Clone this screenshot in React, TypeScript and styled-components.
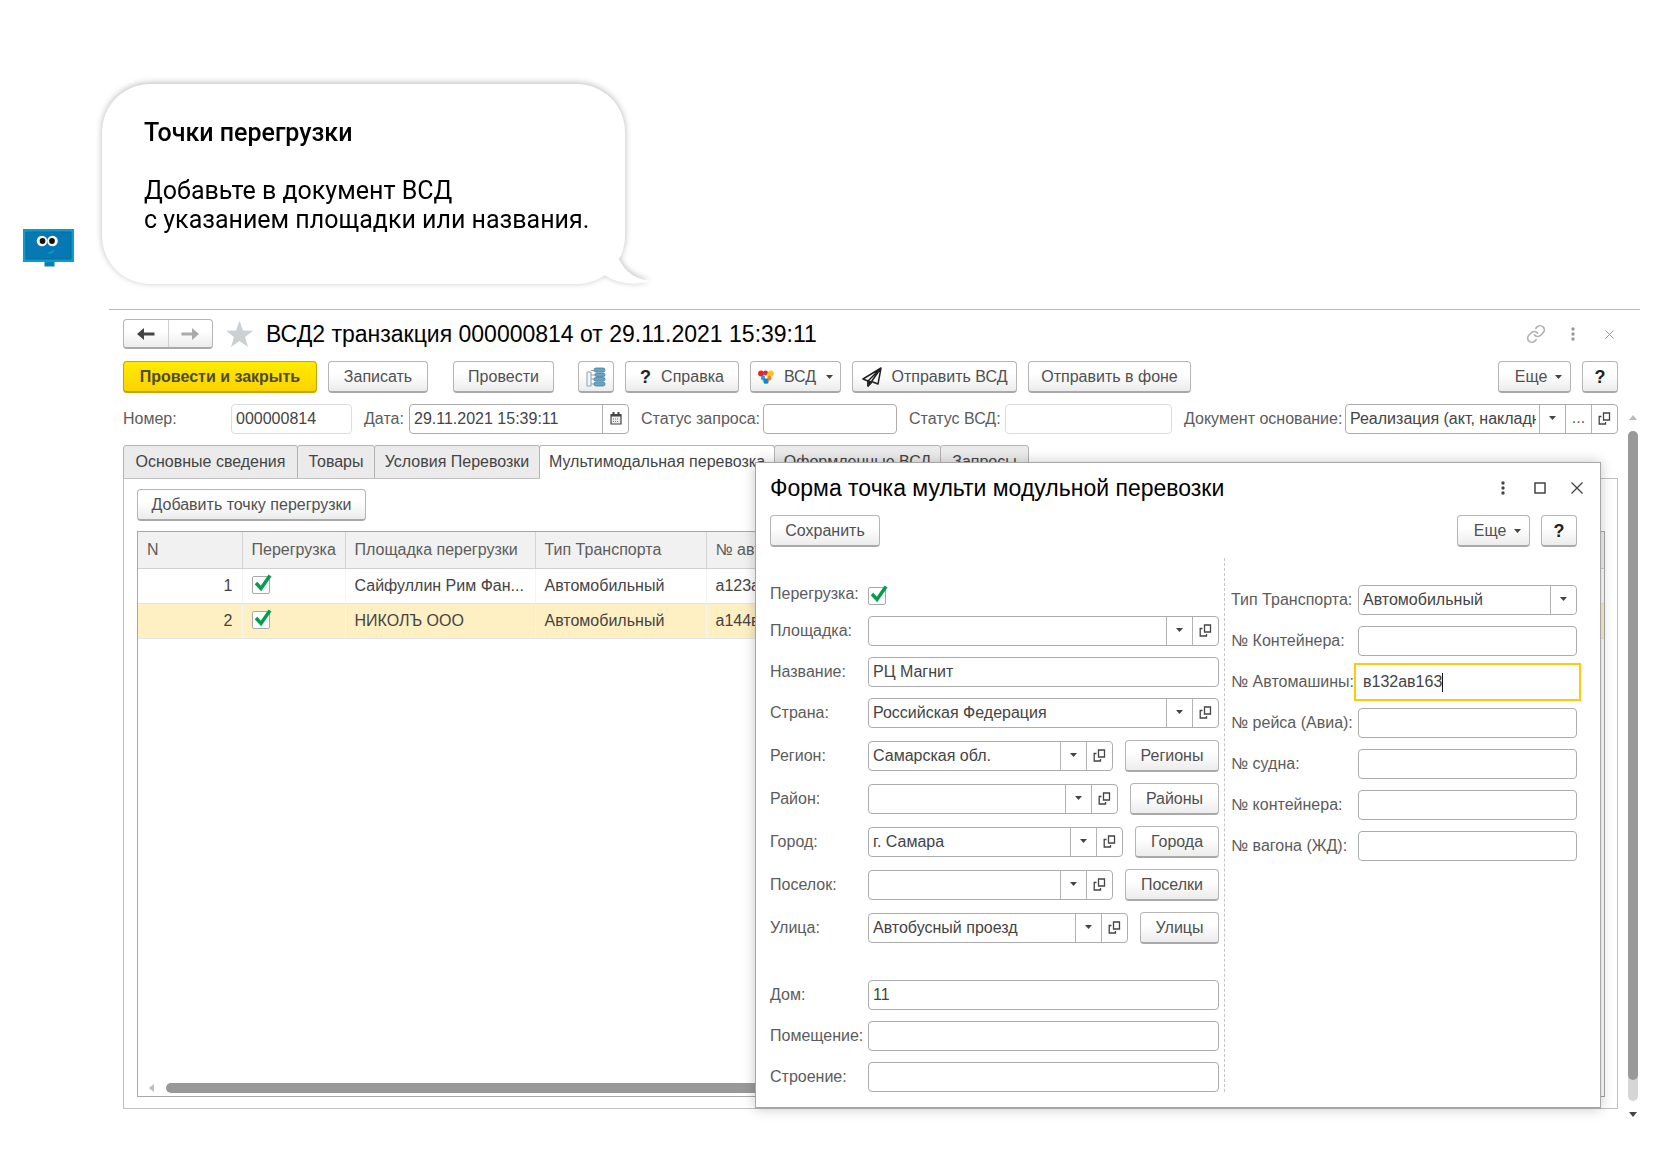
import React from 'react';
import styled, { createGlobalStyle, css } from 'styled-components';

const line = '#b3b3b3';
const sans = '"Liberation Sans", Arial, sans-serif';

const GlobalStyle = createGlobalStyle`
  *, *::before, *::after { box-sizing: border-box; }
  body { margin: 0; background: #fff; color: #444; font: 16px/20px ${sans}; }
  button, input, select { font: inherit; color: inherit; }
`;

/* ---------- page and speech bubble ---------- */

const Page = styled.main`
  padding: 84px 40px 40px 23px;
`;

const Hint = styled.section`
  display: flex;
  align-items: flex-end;
  gap: 28px;
`;

const RobotSlot = styled.div`
  flex: none;
  width: 51px;
  height: 39px;
  margin-bottom: 16px;
  svg { display: block; }
`;

const Bubble = styled.div`
  position: relative;
  width: 523px;
  height: 200px;
  padding: 34px 30px 0 42px;
  border-radius: 48px;
  background: #fff;
  color: #000;
  font: 25px/29px Roboto, sans-serif;
  filter: drop-shadow(0 -1px 3px rgba(0, 0, 0, 0.28));
  h2 { margin: 0 0 29px; font-size: 25px; line-height: 29px; font-weight: 500; }
  p { margin: 0; white-space: nowrap; }
`;

const Tail = styled.svg`
  position: absolute;
  right: -25px;
  bottom: 0;
`;

/* ---------- shared controls ---------- */

const Button = styled.button<{ $w: number; $primary?: boolean; $menu?: boolean }>`
  flex: none;
  display: inline-flex;
  align-items: center;
  justify-content: center;
  gap: ${p => (p.$menu ? 8 : 10)}px;
  width: ${p => p.$w}px;
  height: 32px;
  padding: ${p => (p.$menu ? '0 0 0 8px' : '0')};
  border: 1px solid #b5b5b5;
  border-bottom: 2px solid #a9a9a9;
  border-radius: 4px;
  background: linear-gradient(#fff 40%, #ececec);
  color: #505050;
  white-space: nowrap;
  ${p => p.$primary && css`
    border-color: #c4a600;
    background: linear-gradient(#ffeb00, #fbd300);
    color: #4d4a35;
    font-weight: 700;
  `}
`;

const Mark = styled.b`
  color: #222;
  font-size: 18px;
`;

const IconButton = styled.button`
  display: grid;
  place-items: center;
  width: 37px;
  height: 28px;
  padding: 0;
  border: 0;
  background: none;
`;

const Box = styled.div<{ $quiet?: boolean; $w?: number }>`
  display: flex;
  ${p => (p.$w ? css`flex: none; width: ${p.$w}px;` : css`flex: 1 1 0;`)}
  min-width: 0;
  height: 30px;
  border: 1px solid ${p => (p.$quiet ? '#dcdcdc' : '#acacac')};
  border-radius: 4px;
  background: #fff;
  input, select {
    flex: 1;
    min-width: 0;
    width: 0;
    margin: 0 3px 0 4px;
    padding: 0;
    border: 0;
    outline: 0;
    background: none;
    appearance: none;
  }
`;

const BoxButton = styled.button`
  flex: none;
  display: grid;
  place-items: center;
  width: 26px;
  padding: 0 0 2px;
  border: 0;
  border-left: 1px solid ${line};
  background: none;
`;

const BoxArrow = styled.span`
  flex: none;
  display: grid;
  place-items: center;
  width: 26px;
  padding-bottom: 2px;
  border-left: 1px solid ${line};
`;

const FocusBox = styled.div`
  display: flex;
  align-items: center;
  flex: 1;
  height: 38px;
  margin: -4px;
  padding: 0 7px;
  border: 2px solid #fdcb0c;
  background: #fff;
  input {
    field-sizing: content;
    padding: 0;
    border: 0;
    outline: 0;
    background: none;
    caret-color: transparent;
  }
`;

const Caret = styled.span`
  width: 1px;
  height: 19px;
  background: #111;
`;

const CheckSlot = styled.span`
  display: inline-grid;
  width: 20px;
  height: 22px;
  align-items: end;
  input, svg { grid-area: 1 / 1; }
  input {
    appearance: none;
    width: 18px;
    height: 18px;
    margin: 0;
    border: 1px solid #a8a8a8;
    border-radius: 2px;
    background: #fff;
  }
  svg { pointer-events: none; z-index: 1; }
`;

const Check = ({ id, label }: { id?: string; label?: string }) => (
  <CheckSlot>
    <input type="checkbox" id={id} aria-label={label} defaultChecked />
    <svg width="20" height="22" viewBox="0 0 20 22">
      <path d="M4 11l5 5.500L18 3.500" fill="none" stroke="#009f4d" strokeWidth="3.500" />
    </svg>
  </CheckSlot>
);

const Caretlet = () => (
  <svg width="7" height="4" viewBox="0 0 7 4"><path d="M0 0h7L3.500 4z" fill="#444" /></svg>
);

const OpenIcon = () => (
  <svg width="13" height="13" viewBox="0 0 13 13" fill="none" stroke="#444" strokeWidth="1.300">
    <path d="M5.500 1h6v7h-6z" />
    <path d="M3.500 4.500H1.200V12H7.500v-2" />
  </svg>
);

const CalendarIcon = () => (
  <svg width="12" height="13" viewBox="0 0 12 13">
    <path d="M1 2.500h10v9.500H1z" fill="#eee" stroke="#444" strokeWidth="1.200" />
    <path d="M1 2h10v2.500H1zM2.500 0h2v3h-2zM7.500 0h2v3h-2z" fill="#444" />
    <path d="M3 7h6M3 9.500h6" stroke="#777" strokeDasharray="1 1" />
  </svg>
);

const Dots = ({ color }: { color: string }) => (
  <svg width="4" height="14" viewBox="0 0 4 14" fill={color}>
    <circle cx="2" cy="2" r="1.700" /><circle cx="2" cy="7" r="1.700" /><circle cx="2" cy="12" r="1.700" />
  </svg>
);

const Cross = ({ size, color }: { size: number; color: string }) => (
  <svg width={size} height={size} viewBox="0 0 12 12">
    <path d="M0.500 0.500l11 11M11.500 0.500l-11 11" stroke={color} strokeWidth="1.300" />
  </svg>
);

/* ---------- document window ---------- */

const Window = styled.section`
  display: flex;
  gap: 10px;
  margin: 25px 0 0 86px;
  padding: 8px 2px 0 14px;
  border-top: 1px solid #b9b9b9;
`;

const WindowBody = styled.div`
  flex: 1;
  min-width: 0;
`;

const TitleBar = styled.header`
  display: flex;
  align-items: center;
  height: 32px;
  margin-right: -10px;
  h1 { flex: 1; margin: 0 0 0 13px; color: #000; font-size: 23px; line-height: 28px; font-weight: 400; white-space: nowrap; }
`;

const NavGroup = styled.div`
  display: flex;
  width: 90px;
  height: 30px;
  margin-right: 13px;
  border: 1px solid #b5b5b5;
  border-bottom: 2px solid #a9a9a9;
  border-radius: 4px;
  background: linear-gradient(#fff 40%, #ececec);
  button { flex: 1; display: grid; place-items: center; padding: 0; border: 0; background: none; }
  button + button { border-left: 1px solid #cfcfcf; }
`;

const Toolbar = styled.div`
  display: flex;
  gap: 11px;
  margin-top: 11px;
`;

const Spacer = styled.span<{ $w?: number }>`
  ${p => (p.$w ? css`width: ${p.$w}px;` : css`flex: 1;`)}
`;

const FieldRow = styled.div`
  display: flex;
  align-items: center;
  margin-top: 11px;
  color: #5c5c5c;
  input { color: #444; }
`;

const FieldLabel = styled.label<{ $w: number }>`
  flex: none;
  width: ${p => p.$w}px;
  white-space: nowrap;
`;

const Stage = styled.div`
  display: grid;
  margin-top: 11px;
  > * { grid-area: 1 / 1; min-width: 0; }
`;

const TabArea = styled.div`
  display: flex;
  flex-direction: column;
`;

const Tabs = styled.div`
  display: flex;
  height: 34px;
  margin-bottom: -1px;
`;

const Tab = styled.button<{ $w: number; $on?: boolean }>`
  flex: none;
  width: ${p => p.$w}px;
  padding: 0;
  border: 1px solid ${line};
  border-radius: 3px 3px 0 0;
  background: #ebebeb;
  white-space: nowrap;
  & + & { margin-left: -1px; }
  ${p => p.$on && css`
    border-bottom-color: #fff;
    background: #fff;
    z-index: 1;
  `}
`;

const TabPanel = styled.div`
  flex: 1;
  display: flex;
  flex-direction: column;
  align-items: flex-start;
  gap: 10px;
  padding: 10px 12px 11px 13px;
  border: 1px solid #c0c0c0;
`;

const Grid = styled.div`
  flex: 1;
  align-self: stretch;
  display: flex;
  flex-direction: column;
  justify-content: space-between;
  border: 1px solid #a8a8a8;
  overflow: hidden;
`;

const Table = styled.table`
  width: 100%;
  border-collapse: collapse;
  table-layout: fixed;
  th, td {
    padding: 0 9px;
    text-align: left;
    font-weight: 400;
    white-space: nowrap;
    overflow: hidden;
    border-bottom: 1px solid #e4e4e4;
  }
  th { height: 36px; background: #f1f1f1; color: #5c5c5c; border-bottom-color: #cfcfcf; }
  th + th { border-left: 1px solid #d4d4d4; }
  td { height: 35px; }
  td + td { border-left: 1px solid #f4f4f4; }
  td:first-child { text-align: right; }
`;

const Row = styled.tr<{ $on?: boolean }>`
  background: ${p => (p.$on ? '#fff0c4' : '#fff')};
`;

const HScroll = styled.div`
  display: flex;
  align-items: center;
  gap: 12px;
  height: 16px;
  padding: 0 28px 0 11px;
  &::after { content: ''; flex: 1; height: 10px; border-radius: 5px; background: #999; }
`;

const VScroll = styled.div`
  display: flex;
  flex-direction: column;
  align-items: center;
  width: 10px;
  gap: 11px;
  margin-bottom: -8px;
  padding-top: 97px;
`;

const VTrack = styled.div`
  flex: 1;
  width: 10px;
  padding-bottom: 21px;
  border-radius: 5px;
  background: #d6d6d6;
  &::before { content: ''; display: block; height: 100%; border-radius: 5px; background: #999; }
`;

/* ---------- dialog ---------- */

const Dialog = styled.section`
  z-index: 2;
  display: flex;
  flex-direction: column;
  margin: 17px 17px 0 632px;
  padding: 11px 23px 15px 14px;
  border: 1px solid #a6a6a6;
  border-bottom-width: 2px;
  background: #fff;
  box-shadow: 0 0 12px rgba(0, 0, 0, 0.22);
`;

const DialogTitle = styled.header`
  display: flex;
  align-items: center;
  height: 28px;
  margin-right: -18px;
  h2 { flex: 1; margin: 0; color: #000; font-size: 23px; line-height: 28px; font-weight: 400; white-space: nowrap; }
`;

const DialogBar = styled.div`
  display: flex;
  justify-content: space-between;
  margin-top: 13px;
  > div { display: flex; gap: 11px; }
`;

const Columns = styled.div`
  display: flex;
  margin-top: 11px;
  color: #5c5c5c;
  input, select { color: #444; }
`;

const Column = styled.div<{ $side?: boolean }>`
  display: flex;
  flex-direction: column;
  gap: 11px;
  ${p => p.$side
    ? css`flex: 346; margin-left: 5px; padding: 27px 0 0 6px; border-left: 1px dashed #c4c4c4;`
    : css`flex: 449; padding-top: 25px;`}
`;

const Line = styled.div<{ $labelWidth: number }>`
  display: grid;
  grid-template-columns: ${p => p.$labelWidth}px 1fr;
  align-items: center;
  > label { white-space: nowrap; }
`;

const Pair = styled.div`
  display: flex;
  align-items: center;
  gap: 12px;
`;

const Block = styled.div`
  display: flex;
  flex-direction: column;
  gap: 11px;
  padding: 1px 0 25px;
`;

type FieldProps = { id: string; label: string; value?: string; pick?: boolean; button?: string; width?: number };

const PickBox = ({ id, value, pick }: { id: string; value?: string; pick?: boolean }) => (
  <Box>
    <input id={id} defaultValue={value} />
    {pick && <BoxButton type="button" aria-label="Выбрать"><Caretlet /></BoxButton>}
    {pick && <BoxButton type="button" aria-label="Открыть"><OpenIcon /></BoxButton>}
  </Box>
);

const LeftField = ({ id, label, value, pick, button, width = 94 }: FieldProps) => (
  <Line $labelWidth={98}>
    <label htmlFor={id}>{label}</label>
    <Pair>
      <PickBox id={id} value={value} pick={pick} />
      {button && <Button type="button" $w={width}>{button}</Button>}
    </Pair>
  </Line>
);

const RightField = ({ id, label }: FieldProps) => (
  <Line $labelWidth={127}>
    <label htmlFor={id}>{label}</label>
    <Pair><PickBox id={id} /></Pair>
  </Line>
);

const tabs = [
  { name: 'Основные сведения', width: 175 },
  { name: 'Товары', width: 78 },
  { name: 'Условия Перевозки', width: 166 },
  { name: 'Мультимодальная перевозка', width: 236 },
  { name: 'Оформленные ВСД', width: 167 },
  { name: 'Запросы', width: 89 },
];

const places: FieldProps[] = [
  { id: 'region', label: 'Регион:', value: 'Самарская обл.', button: 'Регионы', width: 94 },
  { id: 'district', label: 'Район:', button: 'Районы', width: 89 },
  { id: 'city', label: 'Город:', value: 'г. Самара', button: 'Города', width: 84 },
  { id: 'village', label: 'Поселок:', button: 'Поселки', width: 94 },
  { id: 'street', label: 'Улица:', value: 'Автобусный проезд', button: 'Улицы', width: 79 },
];

const rows = [
  { n: 1, place: 'Сайфуллин Рим Фан...', type: 'Автомобильный', car: 'а123ав' },
  { n: 2, place: 'НИКОЛЪ ООО', type: 'Автомобильный', car: 'а144вв' },
];

const Robot = () => (
  <svg width="51" height="39" viewBox="0 0 51 39">
    <path d="M21.500 32h10v5.500h-10z" fill="#0b7fb4" />
    <path d="M0 0h51v33H0z" fill="#0a9ccb" />
    <path d="M3 3h45v27H3z" fill="#0679b5" stroke="#066a9c" />
    <circle cx="19" cy="12" r="5.300" fill="#fff" />
    <circle cx="29.500" cy="12" r="5.300" fill="#fff" />
    <circle cx="19.500" cy="12" r="2.900" fill="#111" />
    <circle cx="29" cy="12" r="2.900" fill="#111" />
    <path d="M23 23q6 0 9-4q0 5-4 6q-4 0-5-2z" fill="#0a9ccb" stroke="#066a9c" strokeWidth="0.600" />
  </svg>
);

const ListIcon = () => (
  <svg width="20" height="20" viewBox="0 0 20 20">
    <path d="M1 5h4v14H1z" fill="#f2f5f7" stroke="#8ba3b3" />
    <path d="M5 3.500h4M5 8h4M5 12h4M5 17h4" stroke="#8ba3b3" />
    <g fill="#6ba3c4" stroke="#47819f" strokeWidth="0.800">
      <rect x="8" y="1" width="11" height="4" rx="2" />
      <rect x="9" y="6" width="10" height="3.500" rx="1.500" />
      <rect x="8" y="10.500" width="11" height="3.500" rx="1.500" />
      <rect x="8" y="15" width="11" height="4" rx="2" />
    </g>
  </svg>
);

const BrandIcon = () => (
  <svg width="16" height="14" viewBox="0 0 16 14">
    <circle cx="3" cy="3.500" r="2.900" fill="#e3262e" />
    <circle cx="7.500" cy="2.800" r="2.400" fill="#e3262e" />
    <circle cx="12.800" cy="3.500" r="3" fill="#fdc60a" />
    <circle cx="5.500" cy="8" r="2.500" fill="#1ba3dc" />
    <circle cx="10.800" cy="8" r="2.600" fill="#f58220" />
    <circle cx="8" cy="11.200" r="2.600" fill="#1b84c6" />
    <circle cx="8.200" cy="7" r="1.500" fill="#fff" />
  </svg>
);

const PlaneIcon = () => (
  <svg width="20" height="20" viewBox="0 0 20 20" fill="none" stroke="#222" strokeWidth="1.500" strokeLinejoin="round">
    <path d="M19 1L1 12l5 2zM19 1L6 14v5l3.500-3.500M19 1l-3 16-6.500-2.500z" />
    <path d="M6 14v5l3.500-4z" fill="#222" />
  </svg>
);

const Arrow = ({ color, flip }: { color: string; flip?: boolean }) => (
  <svg width="18" height="12" viewBox="0 0 18 12" transform={flip ? 'scale(-1 1)' : undefined}>
    <path d="M0 6l7-6v4.500h10.500v3H7V12z" fill={color} />
  </svg>
);

export default function App() {
  return (
    <Page>
      <GlobalStyle />
      <Hint>
        <RobotSlot><Robot /></RobotSlot>
        <Bubble>
          <h2>Точки перегрузки</h2>
          <p>Добавьте в документ ВСД<br />с указанием площадки или названия.</p>
          <Tail width="50" height="28" viewBox="0 0 50 28">
            <path d="M19 3Q27 21 50 25.500Q24 32 4 19Z" fill="#fff" />
          </Tail>
        </Bubble>
      </Hint>

      <Window>
        <WindowBody>
          <TitleBar>
            <NavGroup>
              <button type="button" aria-label="Назад"><Arrow color="#444" /></button>
              <button type="button" aria-label="Вперед"><Arrow color="#aaa" flip /></button>
            </NavGroup>
            <svg width="27" height="26" viewBox="0 0 27 26">
              <path d="M13.500 0l3.500 9.500 10 .3-8 6.200 3 10-8.500-6-8.500 6 3-10-8-6.200 10-.3z" fill="#cdd0d2" />
            </svg>
            <h1>ВСД2 транзакция 000000814 от 29.11.2021 15:39:11</h1>
            <IconButton type="button" aria-label="Ссылка">
              <svg width="20" height="20" viewBox="0 0 24 24" fill="none" stroke="#b0b0b0" strokeWidth="2" strokeLinecap="round">
                <path d="M10 13a5 5 0 0 0 7.540.540l3-3a5 5 0 0 0-7.070-7.070l-1.720 1.710" />
                <path d="M14 11a5 5 0 0 0-7.540-.540l-3 3a5 5 0 0 0 7.070 7.070l1.710-1.710" />
              </svg>
            </IconButton>
            <IconButton type="button" aria-label="Меню"><Dots color="#999" /></IconButton>
            <IconButton type="button" aria-label="Закрыть"><Cross size={9} color="#999" /></IconButton>
          </TitleBar>

          <Toolbar>
            <Button type="button" $w={194} $primary>Провести и закрыть</Button>
            <Button type="button" $w={100}>Записать</Button>
            <Spacer $w={3} />
            <Button type="button" $w={101}>Провести</Button>
            <Spacer $w={2} />
            <Button type="button" $w={36} aria-label="Список"><ListIcon /></Button>
            <Button type="button" $w={114}><Mark>?</Mark> Справка</Button>
            <Button type="button" $w={91}><BrandIcon /> ВСД <Caretlet /></Button>
            <Button type="button" $w={165}><PlaneIcon />Отправить ВСД</Button>
            <Button type="button" $w={163}>Отправить в фоне</Button>
            <Spacer />
            <Button type="button" $w={73} $menu>Еще <Caretlet /></Button>
            <Button type="button" $w={36} aria-label="Помощь"><Mark>?</Mark></Button>
          </Toolbar>

          <FieldRow>
            <FieldLabel htmlFor="number" $w={108}>Номер:</FieldLabel>
            <Box $quiet $w={121}><input id="number" defaultValue="000000814" /></Box>
            <Spacer $w={12} />
            <FieldLabel htmlFor="date" $w={45}>Дата:</FieldLabel>
            <Box $w={220}>
              <input id="date" defaultValue="29.11.2021 15:39:11" />
              <BoxButton type="button" aria-label="Календарь"><CalendarIcon /></BoxButton>
            </Box>
            <Spacer $w={12} />
            <FieldLabel htmlFor="request" $w={122}>Статус запроса:</FieldLabel>
            <Box $w={134}><input id="request" /></Box>
            <Spacer $w={12} />
            <FieldLabel htmlFor="status" $w={96}>Статус ВСД:</FieldLabel>
            <Box $quiet $w={167}><input id="status" /></Box>
            <Spacer $w={12} />
            <FieldLabel htmlFor="basis" $w={161}>Документ основание:</FieldLabel>
            <Box>
              <input id="basis" defaultValue="Реализация (акт, накладная)" />
              <BoxButton type="button" aria-label="Выбрать"><Caretlet /></BoxButton>
              <BoxButton type="button">...</BoxButton>
              <BoxButton type="button" aria-label="Открыть"><OpenIcon /></BoxButton>
            </Box>
          </FieldRow>

          <Stage>
            <TabArea>
              <Tabs role="tablist">
                {tabs.map((tab, i) => (
                  <Tab key={tab.name} type="button" role="tab" aria-selected={i === 3} $w={tab.width} $on={i === 3}>{tab.name}</Tab>
                ))}
              </Tabs>
              <TabPanel>
                <Button type="button" $w={229}>Добавить точку перегрузки</Button>
                <Grid>
                  <Table>
                    <colgroup>
                      <col width="104" /><col width="103" /><col width="190" /><col width="171" /><col />
                    </colgroup>
                    <thead>
                      <tr><th>N</th><th>Перегрузка</th><th>Площадка перегрузки</th><th>Тип Транспорта</th><th>№ авто</th></tr>
                    </thead>
                    <tbody>
                      {rows.map(r => (
                        <Row key={r.n} $on={r.n === 2}>
                          <td>{r.n}</td>
                          <td><Check label="Перегрузка" /></td>
                          <td>{r.place}</td>
                          <td>{r.type}</td>
                          <td>{r.car}</td>
                        </Row>
                      ))}
                    </tbody>
                  </Table>
                  <HScroll>
                    <svg width="5" height="8" viewBox="0 0 5 8"><path d="M5 0v8L0 4z" fill="#bbb" /></svg>
                  </HScroll>
                </Grid>
              </TabPanel>
            </TabArea>

            <Dialog role="dialog" aria-labelledby="dialog-title">
              <DialogTitle>
                <h2 id="dialog-title">Форма точка мульти модульной перевозки</h2>
                <IconButton type="button" aria-label="Меню"><Dots color="#444" /></IconButton>
                <IconButton type="button" aria-label="Развернуть">
                  <svg width="12" height="12" viewBox="0 0 12 12"><path d="M1 1h10v10H1z" fill="none" stroke="#444" strokeWidth="1.500" /></svg>
                </IconButton>
                <IconButton type="button" aria-label="Закрыть"><Cross size={12} color="#444" /></IconButton>
              </DialogTitle>
              <DialogBar>
                <Button type="button" $w={110}>Сохранить</Button>
                <div>
                  <Button type="button" $w={73} $menu>Еще <Caretlet /></Button>
                  <Button type="button" $w={36} aria-label="Помощь"><Mark>?</Mark></Button>
                </div>
              </DialogBar>
              <Columns>
                <Column>
                  <Line $labelWidth={98}>
                    <label htmlFor="reload">Перегрузка:</label>
                    <Check id="reload" />
                  </Line>
                  <LeftField id="site" label="Площадка:" pick />
                  <LeftField id="title" label="Название:" value="РЦ Магнит" />
                  <LeftField id="country" label="Страна:" value="Российская Федерация" pick />
                  <Block>
                    {places.map(p => <LeftField key={p.id} {...p} pick />)}
                  </Block>
                  <LeftField id="house" label="Дом:" value="11" />
                  <LeftField id="room" label="Помещение:" />
                  <LeftField id="building" label="Строение:" />
                </Column>
                <Column $side>
                  <Line $labelWidth={127}>
                    <label htmlFor="transport">Тип Транспорта:</label>
                    <Box>
                      <select id="transport" defaultValue="auto"><option value="auto">Автомобильный</option></select>
                      <BoxArrow><Caretlet /></BoxArrow>
                    </Box>
                  </Line>
                  <RightField id="container" label="№ Контейнера:" />
                  <Line $labelWidth={127}>
                    <label htmlFor="car">№ Автомашины:</label>
                    <FocusBox><input id="car" defaultValue="в132ав163" /><Caret /></FocusBox>
                  </Line>
                  <RightField id="flight" label="№ рейса (Авиа):" />
                  <RightField id="ship" label="№ судна:" />
                  <RightField id="container2" label="№ контейнера:" />
                  <RightField id="wagon" label="№ вагона (ЖД):" />
                </Column>
              </Columns>
            </Dialog>
          </Stage>
        </WindowBody>

        <VScroll>
          <svg width="8" height="5" viewBox="0 0 8 5"><path d="M0 5h8L4 0z" fill="#bbb" /></svg>
          <VTrack />
          <svg width="8" height="5" viewBox="0 0 8 5"><path d="M0 0h8L4 5z" fill="#444" /></svg>
        </VScroll>
      </Window>
    </Page>
  );
}
